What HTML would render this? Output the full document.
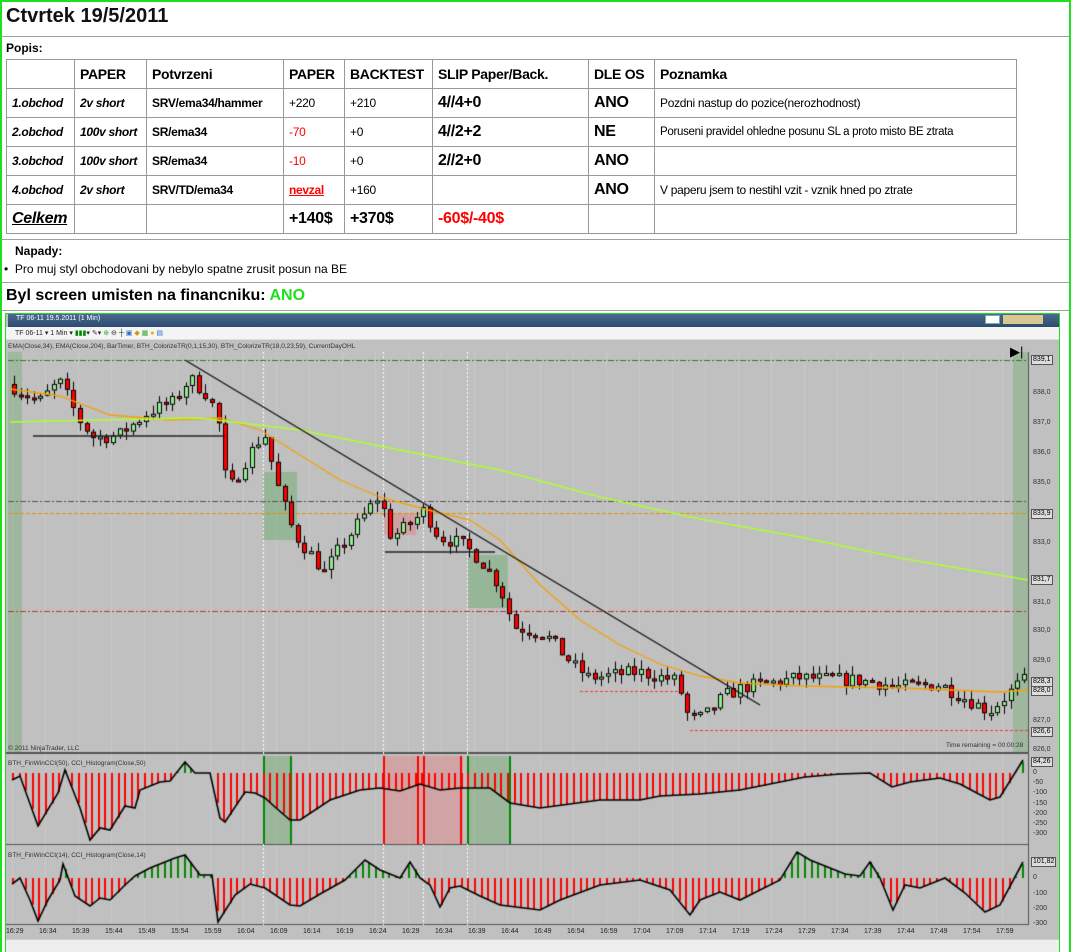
<!DOCTYPE html>
<html><head><meta charset="utf-8">
<style>
*{margin:0;padding:0;box-sizing:border-box}
body{width:1071px;height:952px;overflow:hidden;background:#fff;font-family:"Liberation Sans",sans-serif;position:relative}
.a{position:absolute;white-space:nowrap}
.hl{position:absolute;left:1px;width:1068px;height:1px;background:#a0a0a0}
table{position:absolute;left:6px;top:59px;width:1011px;border-collapse:collapse;font-size:12px;table-layout:fixed}
td{border:1px solid #999;padding:0 5px;height:29px;vertical-align:middle;white-space:nowrap;overflow:hidden;letter-spacing:-0.3px}
tr.h td{font-weight:bold;font-size:14px;height:29px}
.i{font-style:italic;font-weight:bold}
.big{font-weight:bold;font-size:16px}
.r{color:#f00}
.ax{position:absolute;font-size:7px;color:#333;white-space:nowrap}
.tx{position:absolute;font-size:7px;color:#222;top:928px;white-space:nowrap}
.tag{position:absolute;font-size:7px;background:#ddd;border:1px solid #555;padding:0 1px;line-height:8px}
</style></head><body>
<div class="a" style="left:0;top:0;width:1071px;height:952px;border:2px solid #1ee01e;border-right:none;border-bottom:none"></div>
<div class="a" style="left:1069px;top:0;width:2px;height:952px;background:#1ee01e"></div>
<div class="a" style="left:6px;top:5px;font-size:20px;font-weight:bold;color:#111">Ctvrtek 19/5/2011</div>
<div class="hl" style="top:36px"></div>
<div class="a" style="left:6px;top:41px;font-size:12px;font-weight:bold">Popis:</div>
<table>
<col style="width:68px"><col style="width:72px"><col style="width:137px"><col style="width:61px"><col style="width:88px"><col style="width:156px"><col style="width:66px"><col>
<tr class="h"><td></td><td>PAPER</td><td>Potvrzeni</td><td>PAPER</td><td>BACKTEST</td><td>SLIP Paper/Back.</td><td>DLE OS</td><td>Poznamka</td></tr>
<tr><td class="i">1.obchod</td><td class="i">2v short</td><td><b>SRV/ema34/hammer</b></td><td>+220</td><td>+210</td><td class="big">4//4+0</td><td class="big">ANO</td><td>Pozdni nastup do pozice(nerozhodnost)</td></tr>
<tr><td class="i">2.obchod</td><td class="i">100v short</td><td><b>SR/ema34</b></td><td class="r">-70</td><td>+0</td><td class="big">4//2+2</td><td class="big">NE</td><td style="font-size:11.5px">Poruseni pravidel ohledne posunu SL a proto misto BE ztrata</td></tr>
<tr><td class="i">3.obchod</td><td class="i">100v short</td><td><b>SR/ema34</b></td><td class="r">-10</td><td>+0</td><td class="big">2//2+0</td><td class="big">ANO</td><td></td></tr>
<tr><td class="i">4.obchod</td><td class="i">2v short</td><td><b>SRV/TD/ema34</b></td><td class="r" style="font-weight:bold;text-decoration:underline">nevzal</td><td>+160</td><td></td><td class="big">ANO</td><td>V paperu jsem to nestihl vzit - vznik hned po ztrate</td></tr>
<tr><td class="i" style="font-size:16px;text-decoration:underline">Celkem</td><td></td><td></td><td class="big">+140$</td><td class="big">+370$</td><td class="big r">-60$/-40$</td><td></td><td></td></tr>
</table>
<div class="hl" style="top:239px"></div>
<div class="a" style="left:15px;top:244px;font-size:12px;font-weight:bold">Napady:</div>
<div class="a" style="left:4px;top:262px;font-size:12px">•&nbsp; Pro muj styl obchodovani by nebylo spatne zrusit posun na BE</div>
<div class="hl" style="top:282px"></div>
<div class="a" style="left:6px;top:287px;font-size:16px;font-weight:bold">Byl screen umisten na financniku: <span style="color:#1ee01e">ANO</span></div>
<div class="hl" style="top:310px"></div>

<div class="a" style="left:5px;top:313px;width:1055px;height:639px;border:1px solid #1ee01e;background:#c0c0c0;overflow:hidden"></div>
<canvas id="c" width="1071" height="952" class="a" style="left:0;top:0"></canvas>
<div class="a" style="left:8px;top:314px;width:1051px;height:13px;background:linear-gradient(#4a6a90,#2d4a70)"></div>
<div class="a" style="left:16px;top:315px;font-size:7px;color:#fff">TF 06-11 19.5.2011 (1 Min)</div>
<div class="a" style="left:985px;top:315px;width:15px;height:9px;background:#fff;border:1px solid #7aa"></div>
<div class="a" style="left:1003px;top:315px;width:40px;height:9px;background:#d8c890"></div>
<div class="a" style="left:6px;top:327px;width:1053px;height:13px;background:#f4f4f4;border-bottom:1px solid #ddd"></div>
<div class="a" style="left:15px;top:329px;font-size:7px;color:#222">TF 06-11 ▾ 1 Min ▾ <span style="color:#080">▮▮▮</span>▾ <span style="color:#333">✎</span>▾ <span style="color:#3a3">⊕</span> ⊖ ┼ <span style="color:#36c">▣</span> <span style="color:#c90">◆</span> <span style="color:#3a3">▦</span> <span style="color:#ea0">●</span> <span style="color:#36c">▤</span></div>
<div class="a" style="left:8px;top:343px;font-size:6.5px;color:#333">EMA(Close,34), EMA(Close,204), BarTimer, BTH_ColorizeTR(0,1,15,30), BTH_ColorizeTR(18,0,23,59), CurrentDayOHL</div>
<div class="a" style="left:8px;top:745px;font-size:6.5px;color:#333">© 2011 NinjaTrader, LLC</div>
<div class="a" style="left:946px;top:742px;font-size:6.5px;color:#333">Time remaining = 00:00:28</div>
<div class="a" style="left:8px;top:760px;font-size:6.5px;color:#333">BTH_FinWinCCI(50), CCI_Histogram(Close,50)</div>
<div class="a" style="left:8px;top:852px;font-size:6.5px;color:#333">BTH_FinWinCCI(14), CCI_Histogram(Close,14)</div>
<div class="a" style="left:1010px;top:344px;font-size:13px;color:#000">▶|</div>
<div class="ax" style="left:1033px;top:389px">838,0</div>
<div class="ax" style="left:1033px;top:419px">837,0</div>
<div class="ax" style="left:1033px;top:449px">836,0</div>
<div class="ax" style="left:1033px;top:479px">835,0</div>
<div class="ax" style="left:1033px;top:539px">833,0</div>
<div class="ax" style="left:1033px;top:599px">831,0</div>
<div class="ax" style="left:1033px;top:627px">830,0</div>
<div class="ax" style="left:1033px;top:657px">829,0</div>
<div class="ax" style="left:1033px;top:717px">827,0</div>
<div class="ax" style="left:1033px;top:746px">826,0</div>
<div class="tag" style="left:1031px;top:355px">839,1</div>
<div class="tag" style="left:1031px;top:509px">833,9</div>
<div class="tag" style="left:1031px;top:575px">831,7</div>
<div class="tag" style="left:1031px;top:677px">828,3</div>
<div class="tag" style="left:1031px;top:686px">828,0</div>
<div class="tag" style="left:1031px;top:727px">826,6</div>
<div class="tag" style="left:1031px;top:757px">84,26</div>
<div class="ax" style="left:1033px;top:769px">0</div>
<div class="ax" style="left:1033px;top:779px">-50</div>
<div class="ax" style="left:1033px;top:789px">-100</div>
<div class="ax" style="left:1033px;top:800px">-150</div>
<div class="ax" style="left:1033px;top:810px">-200</div>
<div class="ax" style="left:1033px;top:820px">-250</div>
<div class="ax" style="left:1033px;top:830px">-300</div>
<div class="tag" style="left:1031px;top:857px">101,82</div>
<div class="ax" style="left:1033px;top:874px">0</div>
<div class="ax" style="left:1033px;top:890px">-100</div>
<div class="ax" style="left:1033px;top:905px">-200</div>
<div class="ax" style="left:1033px;top:920px">-300</div>
<div class="tx" style="left:6px">16:29</div><div class="tx" style="left:39px">16:34</div><div class="tx" style="left:72px">15:39</div><div class="tx" style="left:105px">15:44</div><div class="tx" style="left:138px">15:49</div><div class="tx" style="left:171px">15:54</div><div class="tx" style="left:204px">15:59</div><div class="tx" style="left:237px">16:04</div><div class="tx" style="left:270px">16:09</div><div class="tx" style="left:303px">16:14</div><div class="tx" style="left:336px">16:19</div><div class="tx" style="left:369px">16:24</div><div class="tx" style="left:402px">16:29</div><div class="tx" style="left:435px">16:34</div><div class="tx" style="left:468px">16:39</div><div class="tx" style="left:501px">16:44</div><div class="tx" style="left:534px">16:49</div><div class="tx" style="left:567px">16:54</div><div class="tx" style="left:600px">16:59</div><div class="tx" style="left:633px">17:04</div><div class="tx" style="left:666px">17:09</div><div class="tx" style="left:699px">17:14</div><div class="tx" style="left:732px">17:19</div><div class="tx" style="left:765px">17:24</div><div class="tx" style="left:798px">17:29</div><div class="tx" style="left:831px">17:34</div><div class="tx" style="left:864px">17:39</div><div class="tx" style="left:897px">17:44</div><div class="tx" style="left:930px">17:49</div><div class="tx" style="left:963px">17:54</div><div class="tx" style="left:996px">17:59</div>
<div class="a" style="left:6px;top:939px;width:1053px;height:13px;background:#eee;border-top:1px solid #ccc"></div>

<script>
(function(){
var c=document.getElementById('c').getContext('2d');
function P(p){return 360+(839-p)*30.0;}
function interp(pts,x){for(var i=1;i<pts.length;i++){if(x<=pts[i][0]){var a=pts[i-1],b=pts[i];var t=(x-a[0])/(b[0]-a[0]);return a[1]+(b[1]-a[1])*t;}}return pts[pts.length-1][1];}
var seed=7;function rnd(){seed=(seed*16807)%2147483647;return seed/2147483647;}
c.strokeStyle='rgba(255,255,255,0.15)';c.lineWidth=1;
for(var i=0;i<31;i++){var x=12.5+33*i;c.beginPath();c.moveTo(x,352);c.lineTo(x,925);c.stroke();}
c.fillStyle='rgba(120,170,120,0.45)';c.fillRect(8,352,14,400);c.fillRect(1013,352,15,400);
c.fillStyle='rgba(110,170,110,0.5)';c.fillRect(263,472,34,68);c.fillRect(468,555,40,53);
c.fillStyle='rgba(220,140,140,0.6)';c.fillRect(384,513,32,22);
c.fillStyle='#555';c.fillRect(6,752,1022,2);c.fillRect(6,844,1022,1);c.fillRect(6,924,1022,1);
c.fillRect(1028,352,1,573);
c.strokeStyle='#fff';c.setLineDash([2,2]);
[263,383,423,467].forEach(function(x){c.beginPath();c.moveTo(x+.5,352);c.lineTo(x+.5,925);c.stroke();});
function hd(y,col,d){c.strokeStyle=col;c.setLineDash(d);c.beginPath();c.moveTo(8,y+.5);c.lineTo(1028,y+.5);c.stroke();}
hd(360,'#2a7a2a',[6,2,2,2]);hd(501,'#555',[6,2,2,2]);hd(513,'#e09000',[4,2]);hd(611,'#b33',[6,2,2,2]);
c.setLineDash([3,2]);c.strokeStyle='#f33';c.beginPath();c.moveTo(690,730.5);c.lineTo(1028,730.5);c.stroke();
c.beginPath();c.moveTo(580,691.5);c.lineTo(680,691.5);c.stroke();
c.setLineDash([]);
c.fillStyle='rgba(110,170,110,0.45)';c.fillRect(263,756,27,88);c.fillRect(467,756,43,88);
c.fillStyle='rgba(220,140,140,0.55)';c.fillRect(383,756,80,88);
c.fillStyle='#080';[263,290,467,509].forEach(function(x){c.fillRect(x,756,2,88);});
c.fillStyle='#f00';[383,417,423,460].forEach(function(x){c.fillRect(x,756,2,88);});
var path=[[10,838.2],[40,837.6],[60,838.3],[80,837.0],[95,836.4],[120,836.5],[150,837.3],[175,837.6],[190,838.4],[210,837.8],[222,836.6],[228,834.5],[245,835.6],[265,836.6],[280,834.6],[295,833.2],[315,832.4],[325,831.9],[340,832.7],[360,833.6],[380,834.5],[392,833.1],[410,833.5],[425,834.0],[440,833.1],[460,832.9],[480,832.4],[500,831.5],[515,830.1],[545,829.9],[575,828.8],[590,828.4],[640,828.6],[678,828.3],[690,827.0],[705,827.1],[725,827.8],[745,828.1],[800,828.4],[870,828.3],[900,828.1],[940,828.2],[990,827.3],[1023,828.3]];
var prev=838.2;
for(var x=12;x<1025;x+=6.6){var tgt=interp(path,x+3);var cl=tgt+(rnd()-0.5)*0.5;var op=prev;
var hi=Math.max(op,cl)+rnd()*0.3,lo=Math.min(op,cl)-rnd()*0.3;
var cx=Math.round(x);c.fillStyle='#000';c.fillRect(cx+2,P(hi),1,P(lo)-P(hi));
var by=P(Math.max(op,cl)),bh=Math.max(3,P(Math.min(op,cl))-by);
c.fillStyle='#000';c.fillRect(cx,by,5,bh);c.fillStyle=cl>op?'#90ee90':'#f00';c.fillRect(cx+1,by+1,3,Math.max(1,bh-2));prev=cl;}
function line(pts,col,w){c.strokeStyle=col;c.lineWidth=w;c.beginPath();pts.forEach(function(p,i){i?c.lineTo(p[0],p[1]):c.moveTo(p[0],p[1]);});c.stroke();}
line([[10,389],[60,396],[110,415],[170,420],[220,418],[260,430],[300,455],[340,480],[380,497],[420,508],[470,520],[500,540],[540,585],[580,620],[620,645],[660,664],[700,676],[740,683],[800,686],[900,688],[1000,692],[1028,690]],'#f5a000',1.3);
line([[10,422],[100,420],[200,418],[300,430],[400,450],[500,470],[600,497],[700,519],[800,537],[900,558],[1028,580]],'#adff2f',1.3);
line([[185,360],[760,705]],'#111',1.3);
line([[33,436],[225,436]],'#222',1.3);line([[385,552],[495,552]],'#222',1.3);
function cci(pts,z,x0,x1){for(var x=x0;x<x1;x+=6.6){var y=interp(pts,x);c.fillStyle=y<z?'#080':'#f00';c.fillRect(Math.round(x),Math.min(y,z),2,Math.abs(y-z));}line(pts,'#000',1.6);}
cci([[12,780],[20,776],[38,826],[58,793],[65,770],[80,808],[90,840],[100,828],[110,830],[125,806],[135,808],[140,790],[160,782],[170,781],[185,762],[195,773],[210,773],[220,818],[225,822],[245,792],[255,793],[265,798],[275,807],[290,820],[300,820],[330,800],[360,790],[380,788],[400,791],[420,784],[440,790],[460,788],[490,788],[510,803],[540,808],[600,800],[640,800],[660,796],[700,794],[740,790],[770,784],[805,777],[840,774],[870,773],[892,787],[910,782],[940,778],[960,784],[975,792],[990,800],[1000,797],[1023,760]],773,12,1024);
cci([[12,884],[20,878],[30,900],[38,921],[48,900],[60,880],[63,864],[75,896],[90,906],[100,898],[110,900],[125,885],[135,876],[150,868],[175,858],[185,855],[200,875],[212,875],[218,922],[235,895],[250,884],[265,888],[290,905],[300,906],[320,894],[345,880],[365,860],[380,870],[400,878],[410,862],[420,878],[430,885],[440,907],[450,888],[460,886],[480,896],[500,905],[540,910],[560,900],[600,885],[640,880],[670,890],[690,915],[700,900],[720,892],[740,900],[780,880],[797,852],[810,860],[825,866],[845,874],[860,876],[870,862],[880,878],[893,910],[905,885],[920,888],[945,878],[965,893],[985,912],[1000,905],[1023,862]],878,12,1024);
})();
</script>
</body></html>
